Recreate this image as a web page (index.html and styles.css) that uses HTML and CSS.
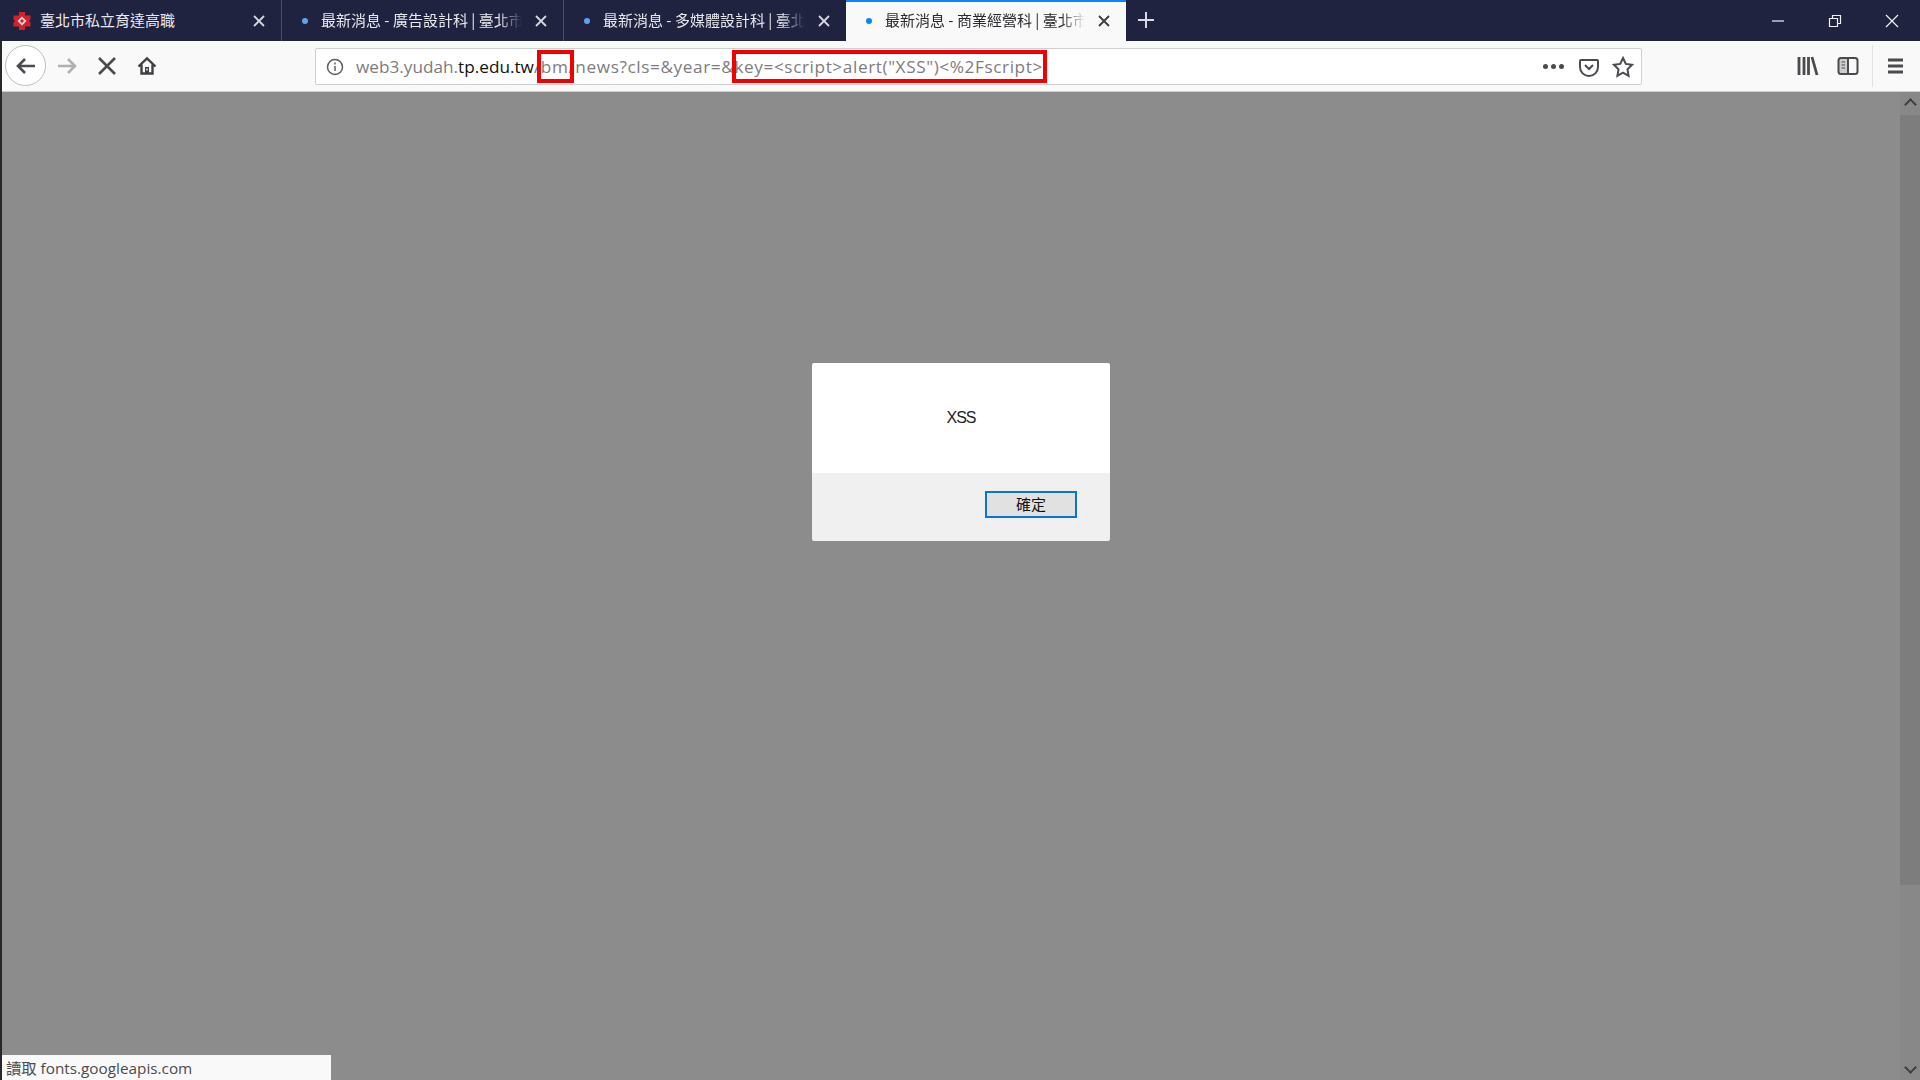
FILE: index.html
```html
<!DOCTYPE html>
<html lang="zh-Hant">
<head>
    <meta charset="UTF-8">
    <title>最新消息 - 商業經營科 | 臺北市</title>
    <link rel="stylesheet" href="styles.css">
</head>
<body>
<div class="browser">
    <div class="tabbar">
        <div class="tab tab-first">
            <svg class="favicon" width="20" height="20" viewBox="0 0 20 20">
                <path d="M7 1h6v3.500h5.500v4L17 10l1.500 1.500v4H13V19H7v-3.500H1.500v-4L3 10 1.500 8.500v-4H7z" fill="#d3222e"/>
                <path d="M10 5.500l4.500 4.500-4.500 4.500L5.500 10z" fill="#f2d6d8"/>
                <path d="M10 8l2 2-2 2-2-2z" fill="#c3202b"/>
            </svg>
            <span class="tab-title">臺北市私立育達高職</span>
            <svg class="tab-close" width="14" height="14" viewBox="0 0 14 14"><path d="M2 2l10 10M12 2L2 12"/></svg>
        </div>
        <div class="tab">
            <span class="tab-dot"></span>
            <span class="tab-title fade">最新消息 - 廣告設計科 | 臺北市</span>
            <svg class="tab-close" width="14" height="14" viewBox="0 0 14 14"><path d="M2 2l10 10M12 2L2 12"/></svg>
        </div>
        <div class="tab tab-third">
            <span class="tab-dot"></span>
            <span class="tab-title fade">最新消息 - 多媒體設計科 | 臺北</span>
            <svg class="tab-close" width="14" height="14" viewBox="0 0 14 14"><path d="M2 2l10 10M12 2L2 12"/></svg>
        </div>
        <div class="tab tab-active">
            <span class="tab-dot"></span>
            <span class="tab-title fade">最新消息 - 商業經營科 | 臺北市</span>
            <svg class="tab-close" width="14" height="14" viewBox="0 0 14 14"><path d="M2 2l10 10M12 2L2 12"/></svg>
        </div>
        <svg class="new-tab" width="18" height="18" viewBox="0 0 18 18"><path d="M9 1v16M1 9h16"/></svg>
        <div class="window-btns">
            <svg width="14" height="14" viewBox="0 0 14 14"><path d="M1 7h12"/></svg>
            <svg width="14" height="14" viewBox="0 0 14 14"><path d="M1.500 4.500h8v8h-8zM4.500 4.500v-3h8v8h-3"/></svg>
            <svg width="14" height="14" viewBox="0 0 14 14"><path d="M1 1l12 12M13 1L1 13"/></svg>
        </div>
    </div>

    <div class="toolbar">
        <div class="nav-btns">
            <div class="back-btn">
                <svg width="22" height="22" viewBox="0 0 22 22" class="icon-dark"><path d="M20 11H3M10 4l-7 7 7 7"/></svg>
            </div>
            <svg class="forward" width="22" height="22" viewBox="0 0 22 22"><path d="M2 11h17M12 4l7 7-7 7"/></svg>
            <svg class="stop icon-dark" width="20" height="20" viewBox="0 0 20 20"><path d="M2 2l16 16M18 2L2 18"/></svg>
            <svg class="home" width="20" height="20" viewBox="0 0 20 20">
                <path d="M1.500 10.500L10 2.500l8.500 8M4.500 8.500v9h11v-9" fill="none" stroke="#3f3f44" stroke-width="2.400"/>
                <rect x="8" y="11" width="4" height="6.500" fill="#3f3f44"/>
                <rect x="9.300" y="12.500" width="1.400" height="2" fill="#f9f9fa"/>
            </svg>
        </div>
        <div class="urlbar">
            <svg class="info" width="18" height="18" viewBox="0 0 18 18"><circle cx="9" cy="9" r="7.500"/><path d="M9 8v5M9 4.500v2"/></svg>
            <div class="url"><span>web3.yudah.</span><b>tp.edu.tw</b><span class="url-path">/bm/news?cls=&amp;year=&amp;</span><span class="url-key">key=&lt;script&gt;alert("XSS")&lt;%2Fscript&gt;</span></div>
            <div class="url-actions">
                <span class="dots"><i></i><i></i><i></i></span>
                <svg width="20" height="20" viewBox="0 0 20 20" class="icon-dark thin"><path d="M2 3h16a1 1 0 0 1 1 1v6a9 9 0 0 1-18 0V4a1 1 0 0 1 1-1z"/><path d="M6 8l4 4 4-4"/></svg>
                <svg width="22" height="22" viewBox="0 0 22 22" class="icon-dark thin"><path d="M11 2l2.800 5.900 6.200.9-4.500 4.500 1.100 6.500-5.600-3.100-5.600 3.100 1.100-6.500L2 8.800l6.200-.9z"/></svg>
            </div>
            <div class="mark mark-bm"></div>
            <div class="mark mark-key"></div>
        </div>
        <div class="tool-btns">
            <svg width="22" height="20" viewBox="0 0 22 20" class="icon-dark thick"><path d="M2 1v18M7 1v18M11.500 1v18M15 1l5 18"/></svg>
            <svg width="22" height="20" viewBox="0 0 22 20" class="icon-dark thin"><rect x="1.500" y="2" width="19" height="16" rx="2.500"/><path d="M11 2v16"/><path d="M2 3h9v14H2z" fill="#4a4a4f" fill-opacity=".25" stroke="none"/><path d="M4.500 6H8M4.500 9H8M4.500 12H8" stroke-width="1.200"/></svg>
            <span class="tool-sep"></span>
            <svg class="menu" width="20" height="18" viewBox="0 0 20 18"><path d="M2 3h15M2 9h15M2 15h15"/></svg>
        </div>
    </div>

    <div class="content">
        <div class="page-area"></div>
        <div class="scrollbar">
            <span class="arrow arrow-up"></span>
            <div class="thumb"></div>
            <span class="arrow arrow-down"></span>
        </div>

        <div class="dialog">
            <div class="dialog-body">XSS</div>
            <div class="dialog-foot"><button class="ok-btn">確定</button></div>
        </div>
        <div class="status">讀取 fonts.googleapis.com</div>
    </div>
</div>
</body>
</html>
```

FILE: styles.css
```css
html, body {
    margin: 0;
    padding: 0;
    height: 100%;
    overflow: hidden;
}
body {
    background-color: #26262b;
    font-family: "Open Sans", "Noto Sans CJK TC", sans-serif;
}
.browser {
    display: flex;
    flex-direction: column;
    height: 1080px;
}

/* tab strip */
.tabbar {
    display: flex;
    align-items: stretch;
    height: 41px;
    background-color: #202340;
    color: #e8e8ee;
}
.tab {
    display: flex;
    align-items: center;
    box-sizing: border-box;
    width: 282px;
    padding: 0 15px 0 20px;
    border-right: 1px solid #4a4d68;
    font-family: "Noto Sans CJK TC", sans-serif;
    font-size: 15px;
    white-space: nowrap;
}
.tab-first {
    width: 282px;
    padding-left: 12px;
}
.tab-third {
    border-right: none;
}
.tab-active {
    width: 280px;
    background-color: #f9f9fa;
    color: #2a2a2e;
    border-right: none;
    border-top: 2px solid #0a84ff;
    padding-bottom: 2px;
}
.favicon {
    flex: none;
    margin-right: 8px;
}
.tab-dot {
    flex: none;
    width: 6px;
    height: 6px;
    margin-right: 13px;
    border-radius: 50%;
    background-color: #5aa5ee;
}
.tab-active .tab-dot {
    background-color: #0a84ff;
}
.tab-title {
    flex: 1;
    min-width: 0;
    margin-bottom: 2px;
}
.fade {
    -webkit-mask-image: linear-gradient(to right, #000 88%, transparent 100%);
    mask-image: linear-gradient(to right, #000 88%, transparent 100%);
}
.tab-close {
    flex: none;
    margin-left: 12px;
    fill: none;
    stroke: #d6d7e0;
    stroke-width: 1.800;
}
.tab-active .tab-close {
    stroke: #3a3a40;
}
.new-tab {
    align-self: center;
    margin: 0 0 2px 11px;
    fill: none;
    stroke: #d8d9e2;
    stroke-width: 2;
}
.window-btns {
    display: flex;
    align-items: center;
    gap: 43px;
    margin-left: auto;
    padding-right: 21px;
}
.window-btns svg {
    fill: none;
    stroke: #f0f0f5;
    stroke-width: 1.200;
}

/* toolbar */
.toolbar {
    display: flex;
    align-items: center;
    box-sizing: border-box;
    height: 51px;
    margin-left: 2px;
    padding-bottom: 1px;
    background-color: #f9f9fa;
    border-bottom: 1px solid #d0d0d2;
}
.icon-dark {
    fill: none;
    stroke: #4a4a4f;
    stroke-width: 2.600;
}
.icon-dark.thin {
    stroke-width: 2;
}
.icon-dark.thick {
    stroke-width: 2.800;
}
.nav-btns {
    display: flex;
    align-items: center;
    flex: none;
    width: 313px;
    padding-left: 3px;
    box-sizing: border-box;
}
.back-btn {
    display: flex;
    align-items: center;
    justify-content: center;
    width: 41px;
    height: 41px;
    box-sizing: border-box;
    border: 1px solid #bcbcc0;
    border-radius: 50%;
    background-color: #fff;
}
.forward {
    margin-left: 10px;
    fill: none;
    stroke: #b1b1b3;
    stroke-width: 2.600;
}
.stop {
    margin-left: 19px;
}
.home {
    margin-left: 20px;
}
.urlbar {
    position: relative;
    display: flex;
    align-items: center;
    box-sizing: border-box;
    width: 1327px;
    height: 37px;
    margin-top: 2px;
    padding: 0 7px 0 10px;
    background-color: #fff;
    border: 1px solid #cfcfd2;
    border-radius: 2px;
}
.info {
    flex: none;
    fill: none;
    stroke: #5b5b60;
    stroke-width: 1.500;
}
.url {
    flex: 1;
    margin-left: 12px;
    color: #7c7c80;
    font-size: 17.200px;
    white-space: nowrap;
}
.url b {
    color: #111;
    font-weight: 400;
}
.url-path {
    letter-spacing: .6px;
}
.url-key {
    letter-spacing: .6px;
}
.url-actions {
    display: flex;
    align-items: center;
    gap: 13px;
}
.dots {
    display: flex;
    gap: 3px;
    margin-right: 2px;
}
.dots i {
    width: 5px;
    height: 5px;
    border-radius: 50%;
    background-color: #4a4a4f;
}
.mark {
    position: absolute;
    top: 1px;
    height: 33px;
    box-sizing: border-box;
    border: 4px solid #f00000;
}
.mark-bm {
    left: 221px;
    width: 37px;
}
.mark-key {
    left: 416px;
    width: 315px;
}
.tool-btns {
    display: flex;
    align-items: center;
    flex: 1;
    padding-left: 155px;
    gap: 18px;
}
.tool-sep {
    width: 1px;
    height: 42px;
    margin-left: -5px;
    background-color: #e2e2e4;
}
.menu {
    margin-left: -5px;
    fill: none;
    stroke: #4a4a4f;
    stroke-width: 3;
}

/* page under the alert overlay */
.content {
    position: relative;
    display: flex;
    flex: 1;
    margin-left: 2px;
    background-color: #8c8c8c;
}
.page-area {
    flex: 1;
}
.scrollbar {
    display: flex;
    flex-direction: column;
    align-items: center;
    width: 20px;
    background-color: #888;
}
.thumb {
    flex: none;
    width: 100%;
    height: 770px;
    margin-top: 6px;
    background-color: #7d7d7d;
}
.arrow {
    flex: none;
    width: 7px;
    height: 7px;
    border: solid #3f3f3f;
    border-width: 2px 0 0 2px;
}
.arrow-up {
    margin-top: 8px;
    transform: rotate(45deg);
}
.arrow-down {
    margin-top: auto;
    margin-bottom: 8px;
    transform: rotate(225deg);
}
.dialog {
    position: absolute;
    left: 810px;
    top: 271px;
    width: 298px;
    height: 178px;
    display: flex;
    flex-direction: column;
    border-radius: 2px;
    overflow: hidden;
    font-family: "Liberation Sans", "Noto Sans CJK TC", sans-serif;
}
.dialog-body {
    display: flex;
    align-items: center;
    justify-content: center;
    height: 110px;
    box-sizing: border-box;
    background-color: #fff;
    color: #222;
    font-size: 16px;
    letter-spacing: -1px;
}
.dialog-foot {
    display: flex;
    flex: 1;
    justify-content: flex-end;
    align-items: flex-start;
    padding: 18px 33px 0 0;
    background-color: #f0f0f0;
}
.ok-btn {
    width: 92px;
    height: 27px;
    padding: 0 0 2px;
    border: 2px solid #0c75c9;
    background-color: #e1e1e1;
    color: #111;
    font-family: "Noto Sans CJK TC", sans-serif;
    font-size: 15px;
}
.status {
    position: absolute;
    left: 0;
    bottom: 0;
    box-sizing: border-box;
    width: 329px;
    height: 25px;
    padding: 1px 0 0 4px;
    background-color: #f9f9fa;
    color: #4a4a4f;
    font-size: 15.300px;
    line-height: 25px;
    white-space: nowrap;
}
```
